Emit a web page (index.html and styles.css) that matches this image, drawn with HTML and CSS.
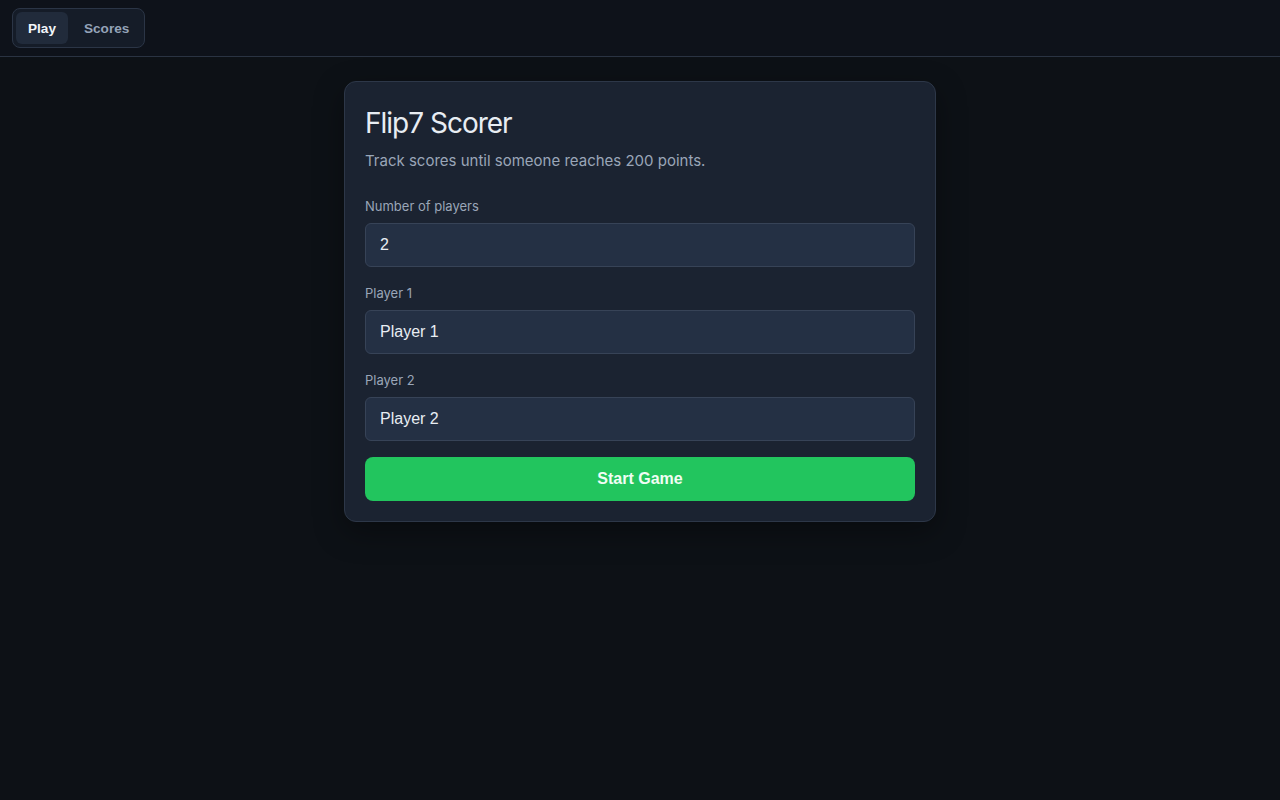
FILE: index.html
```html
<!DOCTYPE html>
<html lang="en">

<head>
    <meta charset="UTF-8">
    <meta name="viewport" content="width=device-width, initial-scale=1.0">
    <title>Flip7 Scorer</title>
    <link rel="stylesheet" href="styles.css">
</head>

<body>
    <header class="topbar">
        <div class="tabs">
            <button class="tab active" type="button">Play</button>
            <button class="tab" type="button">Scores</button>
        </div>
    </header>

    <main class="main">
        <section class="card">
            <h1 class="title">Flip7 Scorer</h1>
            <p class="subtitle">Track scores until someone reaches 200 points.</p>

            <form class="setup" onsubmit="event.preventDefault()">
                <div class="field">
                    <label for="playerCount">Number of players</label>
                    <input id="playerCount" type="text" value="2">
                </div>
                <div class="field">
                    <label for="p1">Player 1</label>
                    <input id="p1" type="text" value="Player 1">
                </div>
                <div class="field">
                    <label for="p2">Player 2</label>
                    <input id="p2" type="text" value="Player 2">
                </div>
                <button class="start" type="submit">Start Game</button>
            </form>
        </section>
    </main>
</body>

</html>
```

FILE: styles.css
```css
/* General styles */
body {
    margin: 0;
    padding: 0;
    background-color: #0d1116;
    color: #e6edf3;
    font-family: Inter, 'Noto Sans', sans-serif;
    min-height: 100vh;
}

.topbar {
    height: 56px;
    background-color: #0e121a;
    border-bottom: 1px solid #2a3342;
    display: flex;
    align-items: center;
    padding: 0 12px;
}

.tabs {
    display: flex;
    gap: 4px;
    padding: 3px;
    background-color: #151c28;
    border: 1px solid #2b3546;
    border-radius: 8px;
}

.tab {
    font-family: 'Liberation Sans', Arial, sans-serif;
    font-size: 13.6px;
    font-weight: bold;
    color: #94a3b8;
    background: transparent;
    border: none;
    border-radius: 6px;
    height: 32px;
    padding: 0 12px;
    cursor: pointer;
}

.tab.active {
    background-color: #212b3b;
    color: #f1f5f9;
}

.main {
    display: flex;
    justify-content: center;
    padding-top: 24px;
}

.card {
    width: 592px;
    box-sizing: border-box;
    padding: 20px;
    background-color: #1b2331;
    border: 1px solid #2d3748;
    border-radius: 12px;
    box-shadow: 0 10px 30px rgba(0, 0, 0, 0.35);
}

.title {
    font-size: 28px;
    font-weight: 400;
    line-height: 34px;
    letter-spacing: -1px;
    margin: 4px 0 12px;
    color: #e8edf3;
}

.subtitle {
    font-size: 15px;
    line-height: 18px;
    margin: 0 0 28px;
    color: #9aa6b8;
}

.field {
    margin-bottom: 18px;
}

.field label {
    display: block;
    font-size: 13px;
    line-height: 16px;
    margin-bottom: 9px;
    color: #9aa6b8;
}

.field input {
    display: block;
    width: 100%;
    box-sizing: border-box;
    height: 44px;
    padding: 0 14px;
    font-family: 'Liberation Sans', Arial, sans-serif;
    font-size: 16px;
    color: #e8edf3;
    background-color: #243044;
    border: 1px solid #374357;
    border-radius: 6px;
    outline: none;
}

.field:last-of-type {
    margin-bottom: 16px;
}

.start {
    display: block;
    width: 100%;
    height: 44px;
    font-family: 'Liberation Sans', Arial, sans-serif;
    font-size: 16px;
    font-weight: bold;
    color: #f0fdf4;
    background-color: #22c55e;
    border: none;
    border-radius: 8px;
    cursor: pointer;
}
```
